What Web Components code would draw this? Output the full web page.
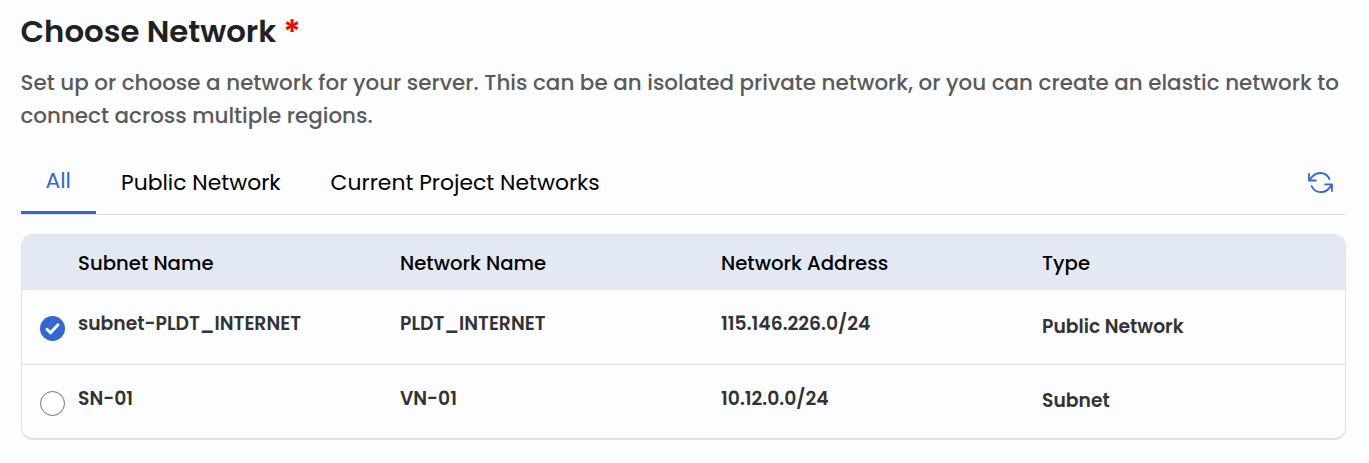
<!DOCTYPE html>
<html lang="en">
<head>
<meta charset="utf-8">
<title>Choose Network</title>
<style>
  body { margin: 0; background: #fcfdff; font-family: Poppins, Inter, "Liberation Sans", sans-serif; }
</style>
</head>
<body>
<network-picker></network-picker>
<script>
class RefreshIcon extends HTMLElement {
  connectedCallback() {
    this.attachShadow({ mode: "open" }).innerHTML = `
      <style>:host{display:block;width:26px;height:22px}svg{display:block}</style>
      <svg width="26" height="22" viewBox="0 0 26 22" fill="none" stroke="#3366d6" stroke-width="1.8" stroke-linecap="round" stroke-linejoin="round">
        <path d="M1 2v6.500h6.800M1.400 8.300C4 4 8 1 12.300 1c4.200 0 7.600 2.400 9.200 6.200"/>
        <path d="M24 19v-6.700h-6.900M23.600 12.500C21.200 17.500 17.200 20.200 12.800 20.200c-4.200 0-7.600-2.400-9.200-6.200"/>
      </svg>`;
  }
}

class RadioMark extends HTMLElement {
  connectedCallback() {
    const on = this.hasAttribute("checked");
    this.attachShadow({ mode: "open" }).innerHTML = `
      <style>:host{display:block;width:25px;height:25px}svg{display:block}</style>
      <svg width="25" height="25" viewBox="0 0 25 25">${on
        ? `<circle cx="12.5" cy="12.5" r="12.5" fill="#3366d6"/><path d="M7 13.300l3.500 3.500L18 8.800" fill="none" stroke="#fff" stroke-width="3" stroke-linecap="round" stroke-linejoin="round"/>`
        : `<circle cx="12.5" cy="12.5" r="12" fill="#fff" stroke="#6b7080"/>`}</svg>`;
  }
}

class NetworkTab extends HTMLElement {
  connectedCallback() {
    this.attachShadow({ mode: "open" }).innerHTML = `
      <style>
        :host{display:block;box-sizing:border-box;height:64px;padding:16px 25px 0;font-size:21.880px;line-height:33px;color:#000;white-space:nowrap}
        :host([active]){color:#3366d6;border-bottom:3px solid #3366d6;padding:14px 0 0 24.500px;width:75px}
      </style><slot></slot>`;
  }
}

class NetworkRow extends HTMLElement {
  connectedCallback() {
    this.attachShadow({ mode: "open" }).innerHTML = `
      <style>
        :host{display:grid;box-sizing:border-box;grid-template-columns:56px 322px 321px 321px 1fr;height:74px;
          font-size:18.750px;font-weight:600;line-height:28px;color:#333;padding-top:20px}
        :host([head]){height:55px;padding-top:14px;background:#e2e9f3;color:#000;font-size:19.700px;font-weight:500}
        :host([divided]){height:75px;border-bottom:1px solid #dcdee2}
        ::slotted(radio-mark){margin:6px 0 0 18px}
        ::slotted([low]){margin-top:3px}
        :host(:last-child) ::slotted([low]){margin-top:2px}
      </style>
      <slot></slot>`;
  }
}

class NetworkPicker extends HTMLElement {
  connectedCallback() {
    this.attachShadow({ mode: "open" }).innerHTML = `
      <style>
        :host{display:block;box-sizing:border-box;height:463px;padding:8px 23px 0 20.500px}
        h2{margin:0;display:flex;gap:7px;font-size:30.750px;line-height:48px;font-weight:600;color:#212121}
        .req{color:#f00;font-size:34px}
        .desc{margin:10px -20px 0 0;font-size:21.440px;line-height:33px;font-weight:500;color:#5a5a5a;white-space:nowrap}
        nav{display:flex;margin:18px 0 0 .5px;height:64px;border-bottom:1px solid #dfe1e5}
        refresh-icon{margin:22px 12px 0 auto}
        .table{margin:19px 0 0 .5px;border:1px solid #dfe1e5;border-radius:12px;overflow:hidden;box-sizing:border-box;height:206px;border-bottom-width:2px}
      </style>
      <h2><span>Choose Network</span><span class="req">*</span></h2>
      <div class="desc">Set up or choose a network for your server. This can be an isolated private network, or you can create an elastic network to<br>connect across multiple regions.</div>
      <nav>
        <network-tab active>All</network-tab>
        <network-tab>Public Network</network-tab>
        <network-tab>Current Project Networks</network-tab>
        <refresh-icon></refresh-icon>
      </nav>
      <div class="table">
        <network-row head><i></i><span>Subnet Name</span><span>Network Name</span><span>Network Address</span><span>Type</span></network-row>
        <network-row divided><radio-mark checked></radio-mark><span>subnet-PLDT_INTERNET</span><span>PLDT_INTERNET</span><span>115.146.226.0/24</span><span low>Public Network</span></network-row>
        <network-row><radio-mark></radio-mark><span>SN-01</span><span>VN-01</span><span>10.12.0.0/24</span><span low>Subnet</span></network-row>
      </div>`;
  }
}

customElements.define("refresh-icon", RefreshIcon);
customElements.define("radio-mark", RadioMark);
customElements.define("network-tab", NetworkTab);
customElements.define("network-row", NetworkRow);
customElements.define("network-picker", NetworkPicker);
</script>
</body>
</html>
